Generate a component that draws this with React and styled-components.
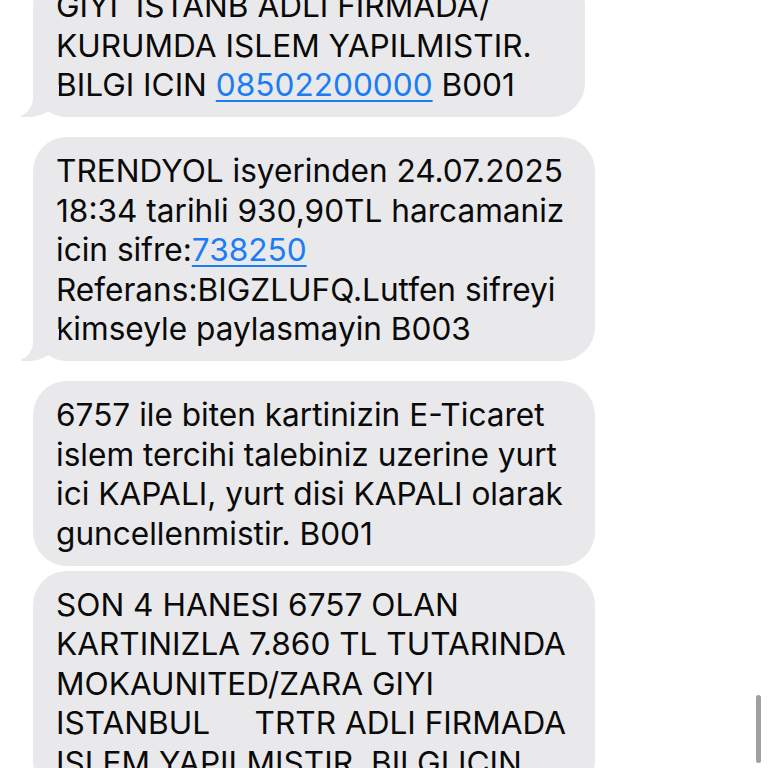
import React from "react";
import styled, { createGlobalStyle, css } from "styled-components";

const GlobalStyle = createGlobalStyle`
  html, body { margin: 0; padding: 0; background: #ffffff; }
  body {
    font-family: "Inter", "Noto Sans", "DejaVu Sans", sans-serif;
    -webkit-font-smoothing: antialiased;
  }
`;

const Screen = styled.main`
  position: relative;
  width: 768px;
  height: 768px;
  overflow: hidden;
  background: #ffffff;
`;

const Thread = styled.div`
  display: flex;
  flex-direction: column;
  align-items: flex-start;
  padding-left: 33px;
  margin-top: -28px;
`;

const Bubble = styled.div`
  position: relative;
  box-sizing: border-box;
  width: ${(p) => p.$width}px;
  padding: 14px 0 12.5px 23px;
  margin-bottom: ${(p) => (p.$tail ? 20 : 5)}px;
  background: #e9e9eb;
  border-radius: 34px;
  color: #0a0a0a;
  font-size: 31.6px;
  line-height: 39.5px;
  letter-spacing: 0;

  ${(p) =>
    p.$tail &&
    css`
      &::before,
      &::after {
        content: "";
        position: absolute;
        bottom: 0;
        height: 32px;
      }
      &::before {
        left: -12px;
        width: 38px;
        background: #e9e9eb;
        border-bottom-right-radius: 30px 26px;
      }
      &::after {
        left: -46px;
        width: 46px;
        background: #ffffff;
        border-bottom-right-radius: 19px;
      }
    `}
`;

const Line = styled.span`
  display: block;
  white-space: pre;
`;

const Link = styled.span`
  color: #1a7df6;
  text-decoration: underline;
  text-decoration-thickness: 2px;
  text-underline-offset: 4px;
`;

const ScrollBar = styled.div`
  position: absolute;
  left: 756px;
  top: 695px;
  width: 5px;
  height: 68px;
  border-radius: 3px;
  background: #8f8f93;
  opacity: 0.85;
`;

export default function App() {
  return (
    <Screen>
      <GlobalStyle />
      <Thread>
        <Bubble $width={552} $tail>
          <Line>GIYI  ISTANB ADLI FIRMADA/</Line>
          <Line>KURUMDA ISLEM YAPILMISTIR.</Line>
          <Line>
            BILGI ICIN <Link>08502200000</Link> B001
          </Line>
        </Bubble>
        <Bubble $width={562} $tail>
          <Line>TRENDYOL isyerinden 24.07.2025</Line>
          <Line>18:34 tarihli 930,90TL harcamaniz</Line>
          <Line>
            icin sifre:<Link>738250</Link>
          </Line>
          <Line>Referans:BIGZLUFQ.Lutfen sifreyi</Line>
          <Line>kimseyle paylasmayin B003</Line>
        </Bubble>
        <Bubble $width={562}>
          <Line>6757 ile biten kartinizin E-Ticaret</Line>
          <Line>islem tercihi talebiniz uzerine yurt</Line>
          <Line>ici KAPALI, yurt disi KAPALI olarak</Line>
          <Line>guncellenmistir. B001</Line>
        </Bubble>
        <Bubble $width={562}>
          <Line>SON 4 HANESI 6757 OLAN</Line>
          <Line>KARTINIZLA 7.860 TL TUTARINDA</Line>
          <Line>MOKAUNITED/ZARA GIYI</Line>
          <Line>ISTANBUL     TRTR ADLI FIRMADA</Line>
          <Line>ISLEM YAPILMISTIR. BILGI ICIN</Line>
        </Bubble>
      </Thread>
      <ScrollBar />
    </Screen>
  );
}
